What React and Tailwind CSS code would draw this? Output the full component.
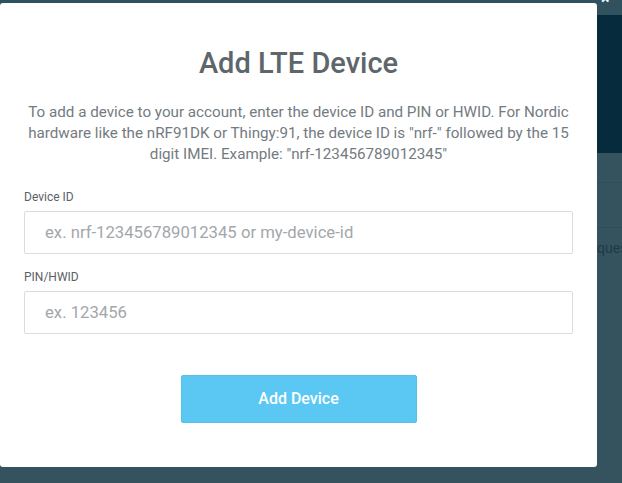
export default function App() {
  return (
    <div className="relative w-[622px] h-[483px] overflow-hidden bg-[#34535f]" style={{ fontFamily: "Roboto, 'Noto Sans', sans-serif" }}>
      {/* background page */}
      <div className="flex flex-col h-full">
        <div className="h-[15px] bg-[#30525f]"></div>
        <div className="h-[138px] bg-[#062b3c]"></div>
        <div className="h-[30px] border-b border-[#2f4d59]"></div>
        <div className="h-[45px] border-b border-[#2f4d59]"></div>
        <div className="h-[40px] flex items-center pl-[597px] text-[14px] text-[#1e3a47] whitespace-nowrap">questions</div>
      </div>

      {/* close button */}
      <div className="absolute left-[601px] top-[-9px] text-[16px] font-bold text-white leading-none">×</div>

      {/* modal */}
      <div className="absolute left-0 top-[3px] w-[597px] h-[464px] bg-white rounded-[3px] px-6 pt-[43px] flex flex-col">
        <h1 className="text-center text-[29px] leading-[34px] font-medium text-[#5e656b]">Add LTE Device</h1>
        <p className="mt-[22px] text-center text-[15.2px] leading-[21px] text-[#737b81]">
          To add a device to your account, enter the device ID and PIN or HWID. For Nordic hardware like the nRF91DK or Thingy:91, the device ID is "nrf-" followed by the 15 digit IMEI. Example: "nrf-123456789012345"
        </p>
        <label className="mt-[24px] text-[12px] leading-[16px] text-[#5b6165]">Device ID</label>
        <div className="mt-[6px] h-[43px] border border-[#dcdcdc] rounded-[2px] flex items-center px-[20px] text-[16.7px] text-[#a3a7ab]">ex. nrf-123456789012345 or my-device-id</div>
        <label className="mt-[15px] text-[12px] leading-[16px] text-[#5b6165]">PIN/HWID</label>
        <div className="mt-[6px] h-[43px] border border-[#dcdcdc] rounded-[2px] flex items-center px-[20px] text-[16.7px] text-[#a3a7ab]">ex. 123456</div>
        <div className="mt-[41px] flex justify-center">
          <button className="w-[236px] h-[48px] bg-[#5bc8f3] border border-[#55c0ea] rounded-[2px] text-white text-[16px] font-medium">Add Device</button>
        </div>
      </div>
    </div>
  );
}
